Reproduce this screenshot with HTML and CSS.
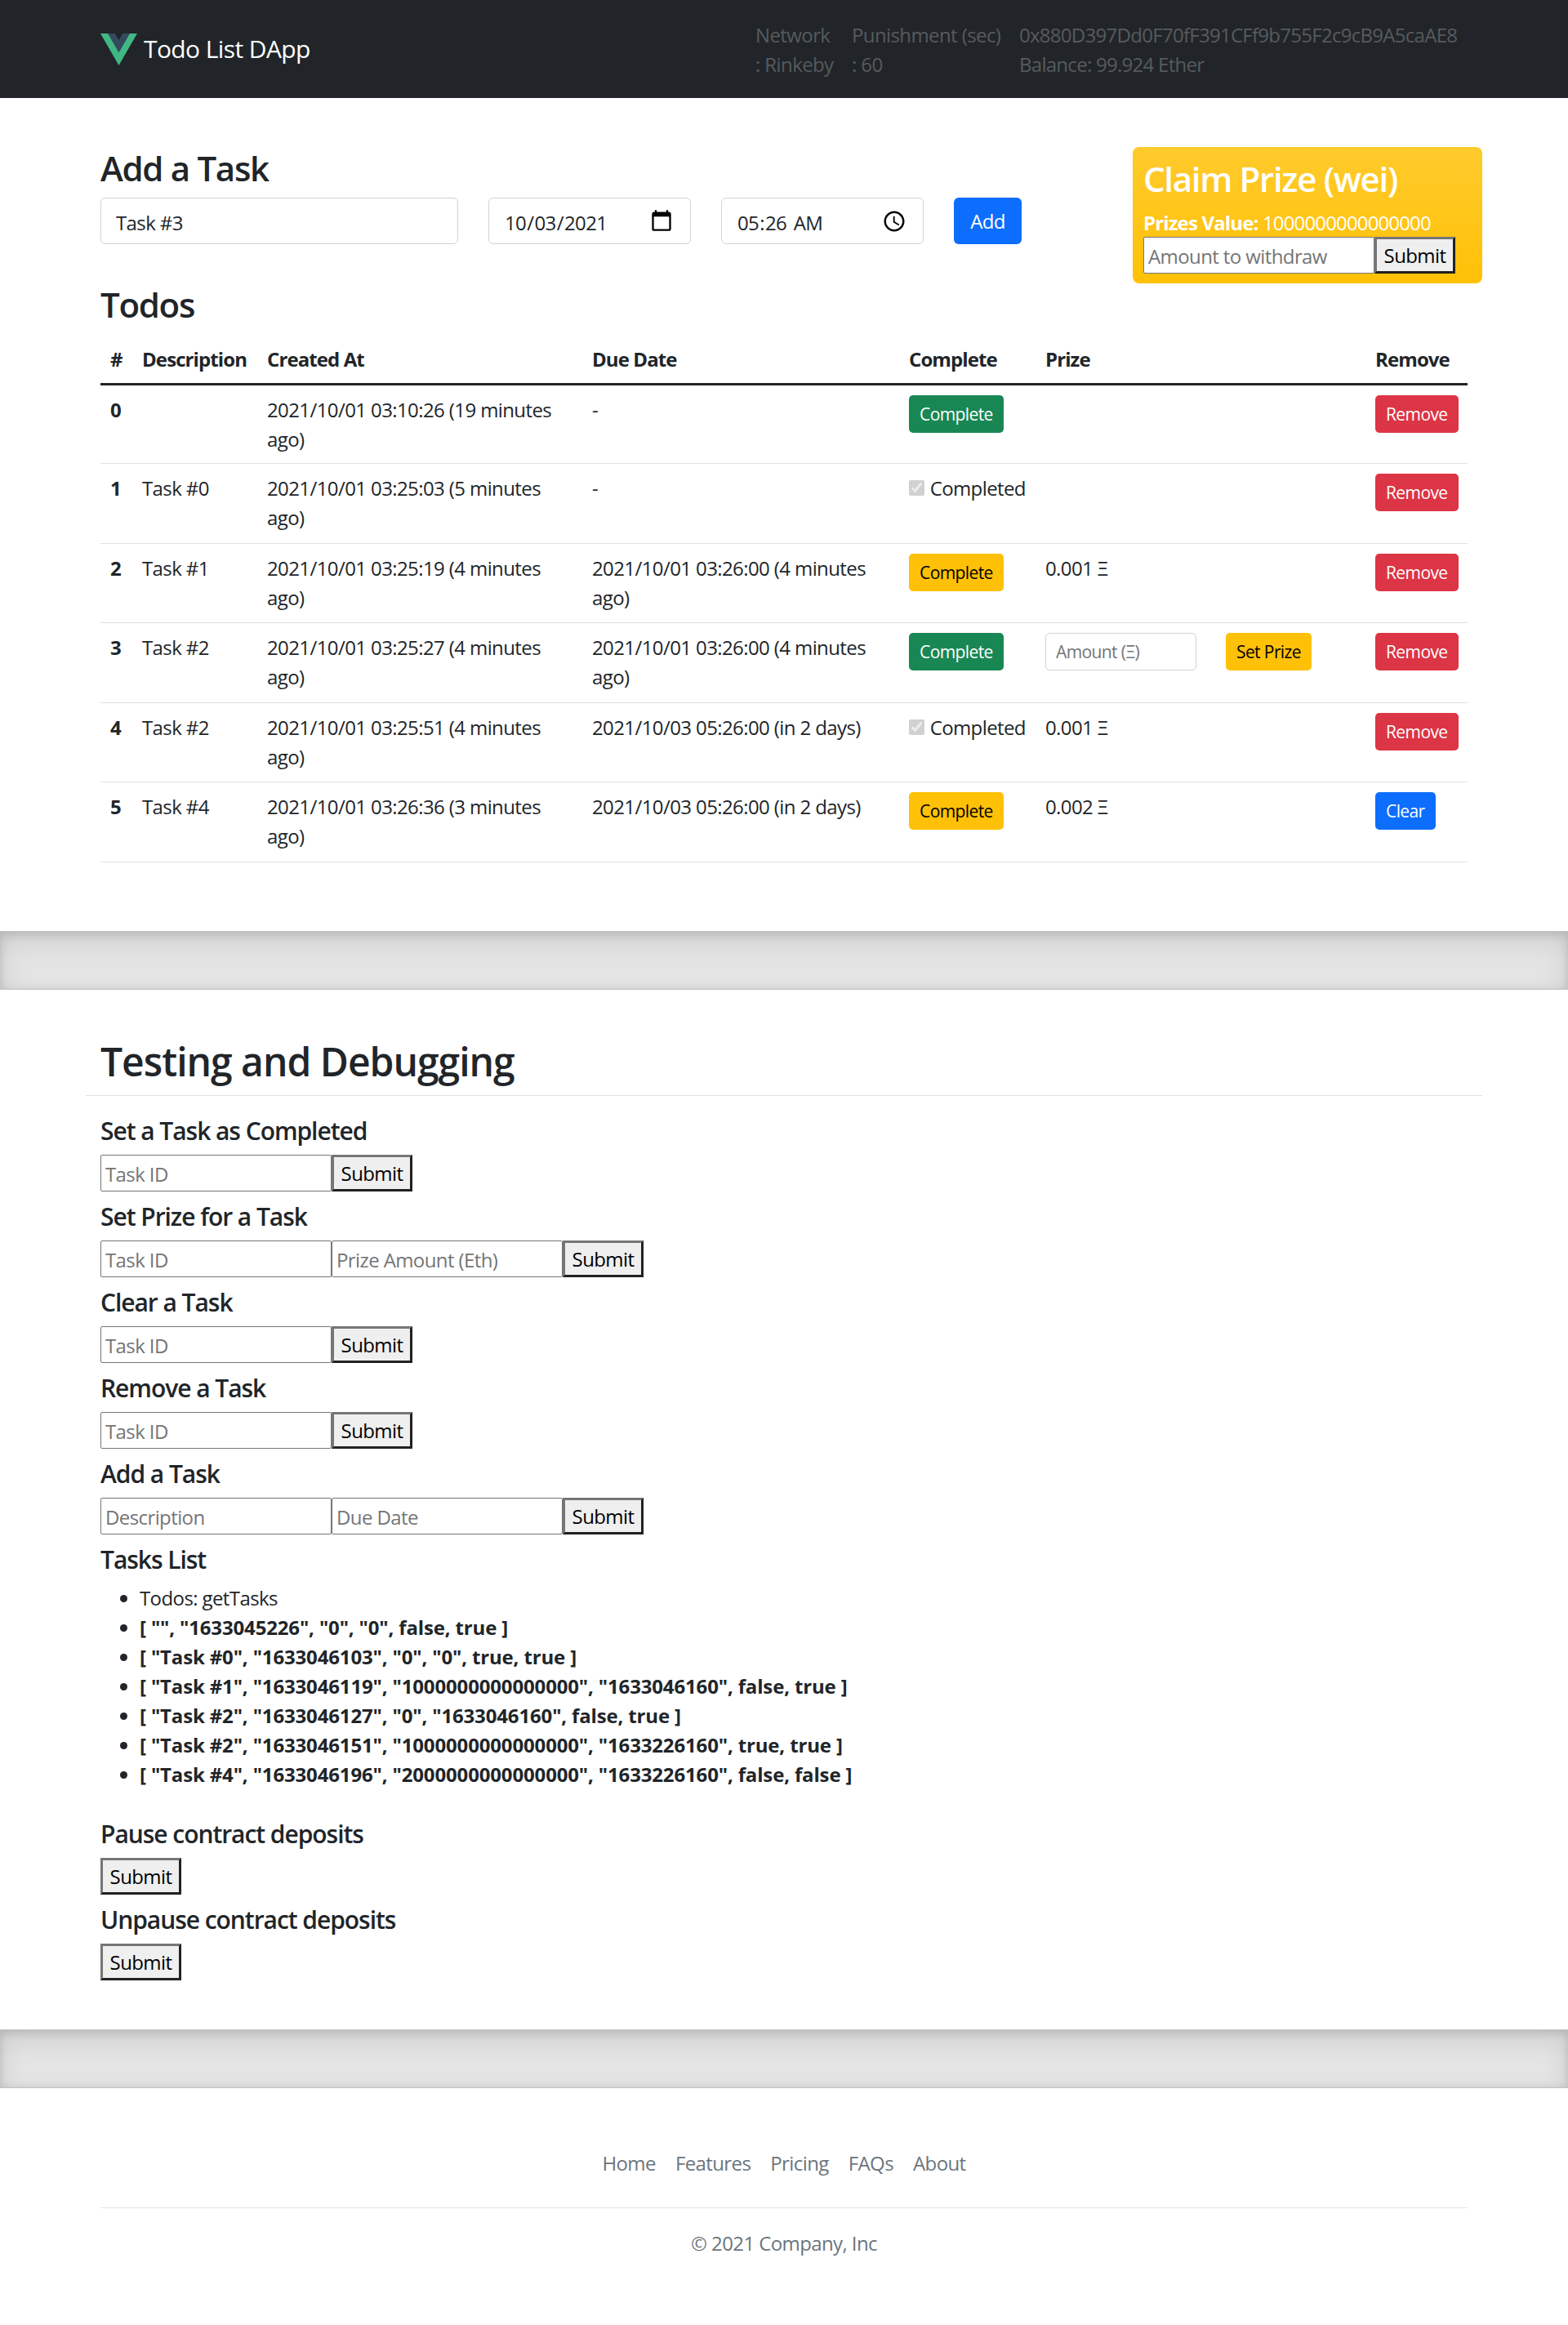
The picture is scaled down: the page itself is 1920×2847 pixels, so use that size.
FILE: index.html
```html
<!DOCTYPE html>
<html>
<head>
    <title>Todo List DApp</title>
    <link rel="stylesheet" href="styles.css">
</head>
<body>
    <header class="site-header">
        <a class="brand" href="#">
            <svg class="brand-logo" viewBox="0 0 261.76 226.69">
                <path fill="#41b883" d="M161.096.001l-30.225 52.351L100.647.001H-.005l130.877 226.688L261.749.001z"/>
                <path fill="#34495e" d="M161.096.001l-30.225 52.351L100.647.001H52.346l78.526 136.01L209.398.001z"/>
            </svg>
            <span>Todo List DApp</span>
        </a>
        <nav class="status-nav">
            <span class="status-network">Network<br>: Rinkeby</span>
            <span class="status-punishment">Punishment (sec)<br>: 60</span>
            <span class="status-account">0x880D397Dd0F70fF391CFf9b755F2c9cB9A5caAE8<br>Balance: 99.924 Ether</span>
        </nav>
    </header>

    <main class="container">
        <div class="top-row">
            <section class="add-task">
                <h3>Add a Task</h3>
                <form class="add-form">
                    <input class="form-control field-desc" type="text" value="Task #3">
                    <input class="form-control field-date" type="date" value="2021-10-03">
                    <input class="form-control field-date" type="time" value="05:26">
                    <button class="btn btn-primary btn-add" type="button">Add</button>
                </form>
            </section>
            <aside class="claim-box">
                <h3>Claim Prize (wei)</h3>
                <div class="claim-value"><b>Prizes Value:</b> 1000000000000000</div>
                <form class="plain-form">
                    <input class="plain-input" type="text" placeholder="Amount to withdraw"><button class="plain-submit" type="button">Submit</button>
                </form>
            </aside>
        </div>

        <section class="todos">
            <h3>Todos</h3>
            <table class="todo-table">
                <colgroup>
                    <col class="col-id"><col class="col-desc"><col class="col-created"><col class="col-due">
                    <col class="col-complete"><col class="col-prize"><col class="col-set"><col class="col-remove">
                </colgroup>
                <thead>
                    <tr><th>#</th><th>Description</th><th>Created At</th><th>Due Date</th><th>Complete</th><th>Prize</th><th></th><th>Remove</th></tr>
                </thead>
                <tbody>
                    <tr>
                        <th>0</th><td></td>
                        <td>2021/10/01 03:10:26 (19 minutes ago)</td>
                        <td>-</td>
                        <td><button class="btn btn-sm btn-success" type="button">Complete</button></td>
                        <td></td><td></td>
                        <td><button class="btn btn-sm btn-danger" type="button">Remove</button></td>
                    </tr>
                    <tr>
                        <th>1</th><td>Task #0</td>
                        <td>2021/10/01 03:25:03 (5 minutes ago)</td>
                        <td>-</td>
                        <td><label class="done"><input type="checkbox" checked disabled> Completed</label></td>
                        <td></td><td></td>
                        <td><button class="btn btn-sm btn-danger" type="button">Remove</button></td>
                    </tr>
                    <tr>
                        <th>2</th><td>Task #1</td>
                        <td>2021/10/01 03:25:19 (4 minutes ago)</td>
                        <td>2021/10/01 03:26:00 (4 minutes ago)</td>
                        <td><button class="btn btn-sm btn-warning" type="button">Complete</button></td>
                        <td>0.001 Ξ</td><td></td>
                        <td><button class="btn btn-sm btn-danger" type="button">Remove</button></td>
                    </tr>
                    <tr>
                        <th>3</th><td>Task #2</td>
                        <td>2021/10/01 03:25:27 (4 minutes ago)</td>
                        <td>2021/10/01 03:26:00 (4 minutes ago)</td>
                        <td><button class="btn btn-sm btn-success" type="button">Complete</button></td>
                        <td><input class="form-control-sm" type="text" placeholder="Amount (Ξ)"></td>
                        <td><button class="btn btn-sm btn-warning" type="button">Set Prize</button></td>
                        <td><button class="btn btn-sm btn-danger" type="button">Remove</button></td>
                    </tr>
                    <tr>
                        <th>4</th><td>Task #2</td>
                        <td>2021/10/01 03:25:51 (4 minutes ago)</td>
                        <td>2021/10/03 05:26:00 (in 2 days)</td>
                        <td><label class="done"><input type="checkbox" checked disabled> Completed</label></td>
                        <td>0.001 Ξ</td><td></td>
                        <td><button class="btn btn-sm btn-danger" type="button">Remove</button></td>
                    </tr>
                    <tr>
                        <th>5</th><td>Task #4</td>
                        <td>2021/10/01 03:26:36 (3 minutes ago)</td>
                        <td>2021/10/03 05:26:00 (in 2 days)</td>
                        <td><button class="btn btn-sm btn-warning" type="button">Complete</button></td>
                        <td>0.002 Ξ</td><td></td>
                        <td><button class="btn btn-sm btn-primary" type="button">Clear</button></td>
                    </tr>
                </tbody>
            </table>
        </section>
    </main>

    <div class="divider divider-first"></div>

    <section class="container debug">
        <h2 class="debug-title">Testing and Debugging</h2>
        <div class="debug-body">
            <h5>Set a Task as Completed</h5>
            <form class="plain-form">
                <input class="plain-input" type="text" placeholder="Task ID"><button class="plain-submit" type="button">Submit</button>
            </form>
            <h5>Set Prize for a Task</h5>
            <form class="plain-form">
                <input class="plain-input" type="text" placeholder="Task ID"><input class="plain-input" type="text" placeholder="Prize Amount (Eth)"><button class="plain-submit" type="button">Submit</button>
            </form>
            <h5>Clear a Task</h5>
            <form class="plain-form">
                <input class="plain-input" type="text" placeholder="Task ID"><button class="plain-submit" type="button">Submit</button>
            </form>
            <h5>Remove a Task</h5>
            <form class="plain-form">
                <input class="plain-input" type="text" placeholder="Task ID"><button class="plain-submit" type="button">Submit</button>
            </form>
            <h5>Add a Task</h5>
            <form class="plain-form">
                <input class="plain-input" type="text" placeholder="Description"><input class="plain-input" type="text" placeholder="Due Date"><button class="plain-submit" type="button">Submit</button>
            </form>
            <h5>Tasks List</h5>
            <ul class="task-dump">
                <li>Todos: getTasks</li>
                <li><b>[ "", "1633045226", "0", "0", false, true ]</b></li>
                <li><b>[ "Task #0", "1633046103", "0", "0", true, true ]</b></li>
                <li><b>[ "Task #1", "1633046119", "1000000000000000", "1633046160", false, true ]</b></li>
                <li><b>[ "Task #2", "1633046127", "0", "1633046160", false, true ]</b></li>
                <li><b>[ "Task #2", "1633046151", "1000000000000000", "1633226160", true, true ]</b></li>
                <li><b>[ "Task #4", "1633046196", "2000000000000000", "1633226160", false, false ]</b></li>
            </ul>
            <h5>Pause contract deposits</h5>
            <form class="plain-form">
                <button class="plain-submit" type="button">Submit</button>
            </form>
            <h5>Unpause contract deposits</h5>
            <form class="plain-form">
                <button class="plain-submit" type="button">Submit</button>
            </form>
        </div>
    </section>

    <div class="divider"></div>

    <footer class="site-footer">
        <ul class="footer-nav">
            <li><a href="#">Home</a></li>
            <li><a href="#">Features</a></li>
            <li><a href="#">Pricing</a></li>
            <li><a href="#">FAQs</a></li>
            <li><a href="#">About</a></li>
        </ul>
        <p class="copyright">© 2021 Company, Inc</p>
    </footer>
</body>
</html>
```

FILE: styles.css
```css
body {
    font-family: "Open Sans", "Noto Sans", Arial, sans-serif;
    font-size: 24px;
    line-height: 36px;
    letter-spacing: -0.6px;
    color: #212529;
    background-color: #ffffff;
    margin: 0;
    padding: 0;
    min-height: 2847px;
}

h2, h3, h5 {
    font-weight: 600;
    line-height: 1.2;
    margin: 0 0 11px;
    padding-top: 1px;
}

h3 {
    font-size: 42px;
    letter-spacing: -1.3px;
}

h5 {
    font-size: 30px;
    letter-spacing: -1.05px;
}

input, button {
    font: inherit;
    letter-spacing: inherit;
}

.site-header {
    display: flex;
    justify-content: space-between;
    background-color: #212529;
    padding: 24px 123px;
    height: 72px;
}

.brand {
    display: flex;
    align-items: center;
    color: #ffffff;
    font-size: 30px;
    text-decoration: none;
    height: 72px;
}

.brand-logo {
    width: 45px;
    height: 39px;
    margin-right: 8px;
}

.status-nav {
    display: flex;
    margin-top: 1px;
    color: rgba(255, 255, 255, 0.25);
}

.status-nav span {
    padding: 0 12px;
    box-sizing: border-box;
    white-space: nowrap;
}

.status-network {
    width: 118px;
}

.status-punishment {
    width: 205px;
}

.status-account {
    width: 561px;
    letter-spacing: -0.72px;
}

.container {
    width: 1710px;
    margin: 0 auto;
}

.top-row {
    display: grid;
    grid-template-columns: 1282px 428px;
    margin-top: 60px;
}

.add-task {
    padding: 0 18px;
}

.add-form {
    display: flex;
    gap: 37px;
}

.form-control {
    box-sizing: border-box;
    height: 57px;
    padding: 11px 18px 7px;
    border: 1px solid #ced4da;
    border-radius: 6px;
    color: #212529;
}

.field-desc {
    width: 438px;
}

.field-date {
    width: 248px;
}

.field-date::-webkit-calendar-picker-indicator {
    width: 30px;
    height: 30px;
    margin: -4px 2px 0 0;
    padding: 0;
}

.field-date::-webkit-datetime-edit-ampm-field {
    margin-left: 4px;
}

.btn {
    border: 1px solid transparent;
    color: #ffffff;
    box-sizing: border-box;
    text-align: center;
}

.btn-add {
    width: 83px;
    height: 57px;
    padding: 1px 0 0;
    border-radius: 6px;
}

.btn-sm {
    height: 46px;
    padding: 0 12px;
    font-size: 21px;
    border-radius: 5px;
}

.btn-primary {
    background-color: #0d6efd;
}

.btn-success {
    background-color: #198754;
}

.btn-danger {
    background-color: #dc3545;
}

.btn-warning {
    background-color: #ffc107;
    color: #000000;
}

.claim-box {
    box-sizing: border-box;
    height: 167px;
    padding: 13px;
    border-radius: 8px;
    color: #ffffff;
    background: linear-gradient(#ffca2c, #ffc107);
}

.claim-value {
    height: 35px;
    white-space: nowrap;
    letter-spacing: -0.85px;
}

.plain-form {
    display: flex;
    margin-bottom: 12px;
}

.plain-input {
    box-sizing: border-box;
    width: 283px;
    height: 45px;
    padding: 3px 5px 1px;
    background-color: #ffffff;
    border: 1px solid #767676;
    border-radius: 2px;
    color: #212529;
}

.plain-input::placeholder,
.form-control-sm::placeholder {
    color: #757575;
}

.plain-submit {
    box-sizing: border-box;
    width: 99px;
    height: 45px;
    padding: 1px 0 0;
    background-color: #efefef;
    color: #000000;
    border: 3px solid;
    border-color: #767676 #212121 #212121 #767676;
}

.todos {
    padding: 0 18px;
}

.todo-table {
    table-layout: fixed;
    width: 1674px;
    border-collapse: collapse;
}

.col-id { width: 39px; }
.col-desc { width: 153px; }
.col-created { width: 398px; }
.col-due { width: 388px; }
.col-complete { width: 167px; }
.col-prize { width: 221px; }
.col-set { width: 183px; }
.col-remove { width: 125px; }

.todo-table th,
.todo-table td {
    padding: 12px 12px 11px;
    text-align: left;
    vertical-align: top;
    font-weight: 400;
}

.todo-table th {
    font-weight: 700;
}

.todo-table thead th {
    padding: 13px 12px 11px;
    letter-spacing: -0.9px;
    border-bottom: 3px solid #212529;
}

.todo-table tbody tr {
    height: 97.5px;
}

.todo-table tbody tr:first-child {
    height: 96px;
}

.todo-table tbody th,
.todo-table tbody td {
    border-bottom: 1px solid #dee2e6;
    box-sizing: border-box;
}

.done {
    white-space: nowrap;
}

.done input {
    width: 19px;
    height: 19px;
    margin: 0 1px 0 0;
}

.form-control-sm {
    box-sizing: border-box;
    width: 185px;
    height: 46px;
    padding: 0 12px;
    font-size: 21px;
    border: 1px solid #ced4da;
    border-radius: 5px;
}

.divider {
    box-sizing: border-box;
    height: 72px;
    background-color: rgba(0, 0, 0, 0.1);
    border: solid rgba(0, 0, 0, 0.15);
    border-width: 1.5px 0;
    box-shadow: inset 0 12px 36px rgba(0, 0, 0, 0.1), inset 0 3px 12px rgba(0, 0, 0, 0.15);
}

.divider-first {
    margin-top: 84.5px;
}

.debug-title {
    font-size: 48px;
    letter-spacing: -1px;
    padding: 2px 18px 12px;
    margin: 57px 0 24px;
    border-bottom: 1px solid #dee2e6;
}

.debug-body {
    padding: 0 18px;
    margin-bottom: 60px;
}

.task-dump {
    margin: 0 0 36px;
    padding-left: 48px;
}

.task-dump b {
    letter-spacing: -0.15px;
}

.site-footer {
    width: 1674px;
    margin: 0 auto;
    padding-top: 74px;
    color: #6c757d;
}

.footer-nav {
    display: flex;
    justify-content: center;
    gap: 24px;
    list-style: none;
    margin: 0;
    padding: 0 0 36px;
    border-bottom: 1px solid #dee2e6;
}

.footer-nav a {
    color: #6c757d;
    text-decoration: none;
}

.copyright {
    margin: 25px 0 0;
    text-align: center;
}
```
